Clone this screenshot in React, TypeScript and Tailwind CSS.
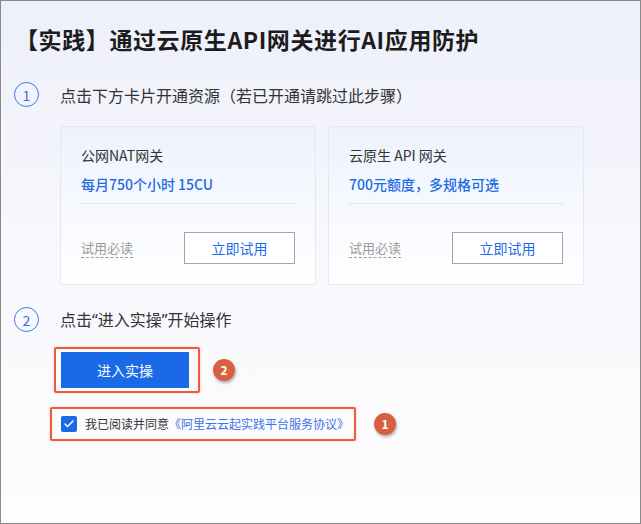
import { Check } from 'lucide-react';

const FONT = "font-['Noto_Sans_CJK_SC','Noto_Sans',sans-serif]";

const CARDS = [
  { title: '公网NAT网关', desc: '每月750个小时 15CU' },
  { title: '云原生 API 网关', desc: '700元额度，多规格可选' },
];

function StepNum({ n }: { n: number }) {
  return (
    <span className="flex h-[25px] w-[25px] shrink-0 items-center justify-center rounded-full border-[1.5px] border-[#3b7ce9] text-[14px] leading-none text-[#2f6fe6]">
      {n}
    </span>
  );
}

function Badge({ n }: { n: number }) {
  return (
    <span className="flex h-[22px] w-[22px] shrink-0 items-center justify-center rounded-full bg-[#d6603f] text-[12px] font-bold leading-none text-white shadow-[1px_2px_3px_rgba(0,0,0,0.3)]">
      {n}
    </span>
  );
}

export default function App() {
  return (
    <div
      className={`${FONT} h-[524px] w-[641px] overflow-hidden border border-[#8a8a8a] bg-gradient-to-b from-[#eef0fa] via-[#f8f8fd] to-[#fdfdfd] text-[#262626]`}
    >
      <h1 className="pl-[14px] pt-[22px] text-[23px] font-bold leading-[32px] tracking-[0.6px] text-[#1c1c1c]">
        【实践】通过云原生API网关进行AI应用防护
      </h1>

      <div className="mt-[27px] flex items-center gap-[21px] pl-[13px]">
        <StepNum n={1} />
        <span className="text-[16px] leading-6 text-[#333]">点击下方卡片开通资源（若已开通请跳过此步骤）</span>
      </div>

      <div className="ml-[59px] mt-[19px] flex gap-[12px]">
        {CARDS.map((c) => (
          <div
            key={c.title}
            className="flex h-[159px] w-[256px] flex-col border border-[#e6e8ec] bg-gradient-to-b from-[#edf2fd] to-white px-5 pt-[18px]"
          >
            <div className="text-[14px] leading-5 text-[#333]">{c.title}</div>
            <div className="mt-[9px] text-[14px] font-medium leading-5 text-[#1e6be6]">{c.desc}</div>
            <div className="mt-[9px] border-t border-[#e5e7eb]" />
            <div className="mt-[28px] flex items-center justify-between">
              <span className="border-b border-dashed border-[#9a9a9a] text-[13px] leading-[18px] text-[#9a9a9a]">
                试用必读
              </span>
              <button className="h-[32px] w-[111px] border border-[#9ca5b3] bg-white text-[14px] text-[#1e6be6]">
                立即试用
              </button>
            </div>
          </div>
        ))}
      </div>

      <div className="mt-[22px] flex items-center gap-[21px] pl-[13px]">
        <StepNum n={2} />
        <span className="text-[16px] leading-6 text-[#333]">
          点击<span className="font-['Noto_Sans',sans-serif]">“</span>进入实操
          <span className="font-['Noto_Sans',sans-serif]">”</span>开始操作
        </span>
      </div>

      <div className="ml-[53px] mt-[15px] flex items-center gap-[13px]">
        <div className="rounded-[2px] border-2 border-[#f05a3c] py-[3px] pl-[5px] pr-[9px] shadow-[0_0_2px_rgba(240,90,60,0.4)]">
          <button className="h-[36px] w-[128px] bg-[#1a6ae8] text-[14px] text-white">进入实操</button>
        </div>
        <Badge n={2} />
      </div>

      <div className="ml-[49px] mt-[14px] flex items-center gap-[18px]">
        <div className="flex h-[34px] items-center gap-[8px] whitespace-nowrap rounded-[2px] border-2 border-[#f05a3c] pl-[9px] pr-[5px] shadow-[0_0_2px_rgba(240,90,60,0.4)]">
          <span className="flex h-[16px] w-[16px] items-center justify-center rounded-[2px] bg-[#1a6ae8]">
            <Check className="h-3 w-3 text-white" strokeWidth={3} />
          </span>
          <span className="text-[12px] leading-5 text-[#333]">
            我已阅读并同意<span className="text-[#3b74e6]">《阿里云云起实践平台服务协议》</span>
          </span>
        </div>
        <Badge n={1} />
      </div>
    </div>
  );
}
